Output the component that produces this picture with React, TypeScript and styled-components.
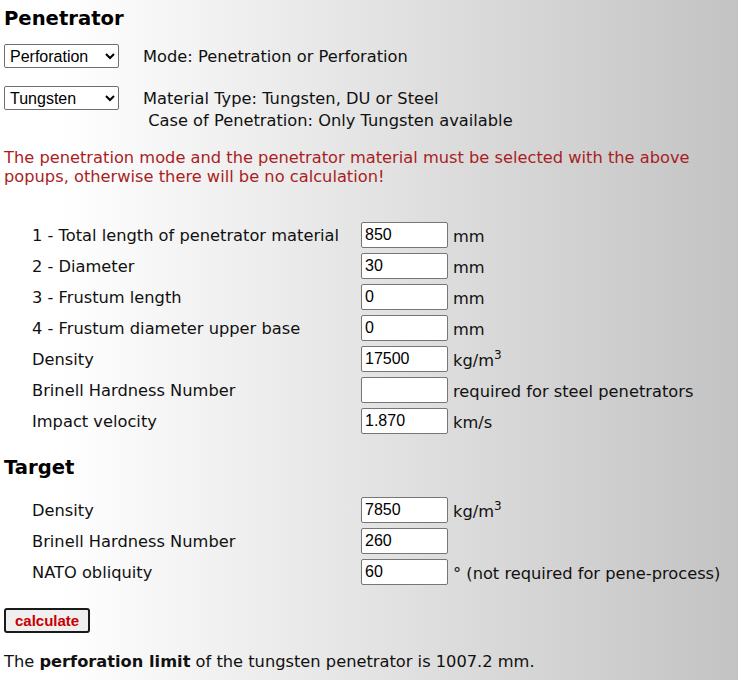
import React from 'react';
import styled, { createGlobalStyle } from 'styled-components';

const GlobalStyle = createGlobalStyle`
  html, body {
    margin: 0;
    padding: 0;
  }
  body {
    font-family: "DejaVu Sans", Verdana, sans-serif;
    font-size: 16.25px;
    color: #111;
  }
`;

const Page = styled.div`
  min-height: 100vh;
  padding: 0 4px 20px;
  box-sizing: border-box;
  background: linear-gradient(to right, #ffffff 8%, #c3c3c3 100%);
`;

const Heading = styled.h2<{ $top: number }>`
  margin: ${(p) => p.$top}px 0 0;
  font-size: 19.6px;
  line-height: 24px;
  font-weight: bold;
  color: #000;
`;

const PopupRow = styled.div<{ $top: number }>`
  display: flex;
  align-items: flex-start;
  margin-top: ${(p) => p.$top}px;
`;

const Popup = styled.select`
  width: 115px;
  height: 24px;
  font-family: "Liberation Sans", Arial, sans-serif;
  font-size: 16px;
  border: 1px solid #6e6e6e;
  border-radius: 2px;
  background: #fff;
  color: #000;
  padding: 0 1px;
`;

const PopupNote = styled.div`
  margin-left: 24px;
  padding-top: 2px;
  line-height: 22px;
`;

const Warning = styled.p`
  margin: 16px 0 0;
  line-height: 19px;
  color: #a91e24;
`;

const FieldGrid = styled.div<{ $top: number }>`
  display: grid;
  grid-template-columns: 329px 87px auto;
  grid-auto-rows: 26px;
  row-gap: 5px;
  align-items: center;
  margin-top: ${(p) => p.$top}px;
  padding-left: 28px;
`;

const Label = styled.span`
  line-height: 19px;
  padding-top: 1px;
`;

const Field = styled.input`
  width: 87px;
  height: 26px;
  box-sizing: border-box;
  font-family: "Liberation Sans", Arial, sans-serif;
  font-size: 16px;
  color: #000;
  border: 1px solid #767676;
  border-radius: 2px;
  padding: 1px 3px;
  background: #fff;
`;

const Unit = styled.span`
  padding-left: 5px;
  padding-top: 3px;
  white-space: nowrap;

  sup {
    font-size: 12px;
    line-height: 0;
    vertical-align: 7px;
  }
`;

const CalcButton = styled.button`
  margin-top: 23px;
  height: 25px;
  padding: 0 9px;
  font-family: "Liberation Sans", Arial, sans-serif;
  font-size: 15px;
  font-weight: bold;
  color: #c80000;
  background: #efefef;
  border: 2px solid #1a1a1a;
  border-radius: 3px;
`;

const Result = styled.p`
  margin: 19px 0 0;
  line-height: 19px;
`;

type Row = { label: string; value: string; unit?: React.ReactNode };

const penetratorRows: Row[] = [
  { label: '1 - Total length of penetrator material', value: '850', unit: 'mm' },
  { label: '2 - Diameter', value: '30', unit: 'mm' },
  { label: '3 - Frustum length', value: '0', unit: 'mm' },
  { label: '4 - Frustum diameter upper base', value: '0', unit: 'mm' },
  { label: 'Density', value: '17500', unit: <>kg/m<sup>3</sup></> },
  { label: 'Brinell Hardness Number', value: '', unit: 'required for steel penetrators' },
  { label: 'Impact velocity', value: '1.870', unit: 'km/s' },
];

const targetRows: Row[] = [
  { label: 'Density', value: '7850', unit: <>kg/m<sup>3</sup></> },
  { label: 'Brinell Hardness Number', value: '260' },
  { label: 'NATO obliquity', value: '60', unit: '° (not required for pene-process)' },
];

const Fields = ({ rows, top }: { rows: Row[]; top: number }) => (
  <FieldGrid $top={top}>
    {rows.map((r, i) => (
      <React.Fragment key={i}>
        <Label>{r.label}</Label>
        <Field type="text" defaultValue={r.value} />
        <Unit>{r.unit}</Unit>
      </React.Fragment>
    ))}
  </FieldGrid>
);

const App = () => {
  return (
    <Page>
      <GlobalStyle />
      <Heading $top={0} style={{ paddingTop: 7 }}>Penetrator</Heading>

      <PopupRow $top={13}>
        <Popup defaultValue="perf">
          <option value="pene">Penetration</option>
          <option value="perf">Perforation</option>
        </Popup>
        <PopupNote>Mode: Penetration or Perforation</PopupNote>
      </PopupRow>

      <PopupRow $top={18}>
        <Popup defaultValue="w">
          <option value="w">Tungsten</option>
          <option value="du">DU</option>
          <option value="st">Steel</option>
        </Popup>
        <PopupNote>
          Material Type: Tungsten, DU or Steel
          <br />
          &nbsp;Case of Penetration: Only Tungsten available
        </PopupNote>
      </PopupRow>

      <Warning>
        The penetration mode and the penetrator material must be selected with the above
        popups, otherwise there will be no calculation!
      </Warning>

      <Fields rows={penetratorRows} top={36} />

      <Heading $top={22}>Target</Heading>

      <Fields rows={targetRows} top={17} />

      <CalcButton>calculate</CalcButton>

      <Result>
        The <b>perforation limit</b> of the tungsten penetrator is 1007.2 mm.
      </Result>
    </Page>
  );
};

export default App;
